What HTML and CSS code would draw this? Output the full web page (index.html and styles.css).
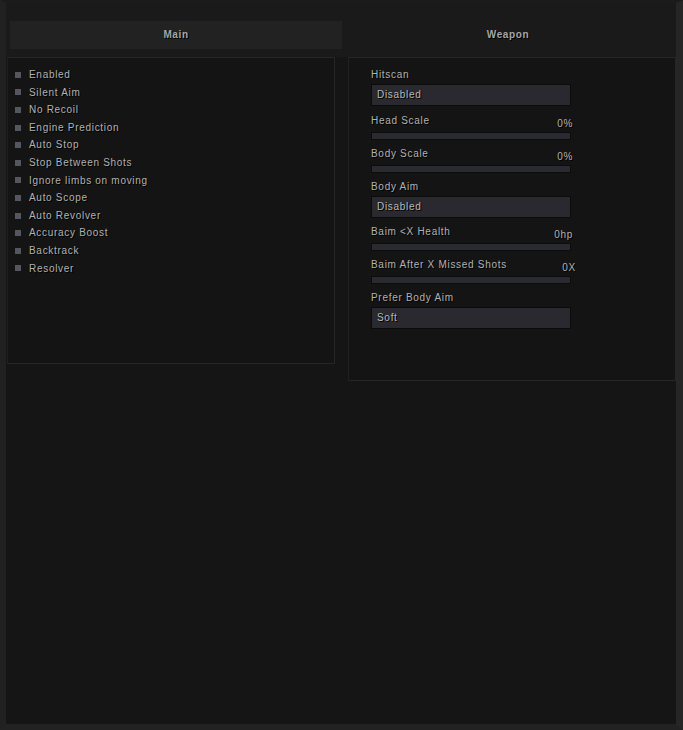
FILE: index.html
```html
<!DOCTYPE html>
<html>
<head>
<meta charset="utf-8">
<link rel="stylesheet" href="styles.css">
</head>
<body>
<div class="frame">
  <div class="tabs">
    <div class="tab active">Main</div>
    <div class="tab">Weapon</div>
  </div>
  <div class="panels">
    <div class="panel left">
      <div class="check"><span class="box"></span>Enabled</div>
      <div class="check"><span class="box"></span>Silent Aim</div>
      <div class="check"><span class="box"></span>No Recoil</div>
      <div class="check"><span class="box"></span>Engine Prediction</div>
      <div class="check"><span class="box"></span>Auto Stop</div>
      <div class="check"><span class="box"></span>Stop Between Shots</div>
      <div class="check"><span class="box"></span>Ignore limbs on moving</div>
      <div class="check"><span class="box"></span>Auto Scope</div>
      <div class="check"><span class="box"></span>Auto Revolver</div>
      <div class="check"><span class="box"></span>Accuracy Boost</div>
      <div class="check"><span class="box"></span>Backtrack</div>
      <div class="check"><span class="box"></span>Resolver</div>
    </div>
    <div class="panel right">
      <div class="item first">
        <div class="label">Hitscan</div>
        <div class="dropdown">Disabled</div>
      </div>
      <div class="item">
        <div class="head"><span class="label">Head Scale</span><span class="value">0%</span></div>
        <div class="bar"></div>
      </div>
      <div class="item">
        <div class="head"><span class="label">Body Scale</span><span class="value">0%</span></div>
        <div class="bar"></div>
      </div>
      <div class="item">
        <div class="label">Body Aim</div>
        <div class="dropdown">Disabled</div>
      </div>
      <div class="item">
        <div class="head"><span class="label">Baim &lt;X Health</span><span class="value">0hp</span></div>
        <div class="bar"></div>
      </div>
      <div class="item">
        <div class="head"><span class="label">Baim After X Missed Shots</span><span class="value wide">0X</span></div>
        <div class="bar"></div>
      </div>
      <div class="item">
        <div class="label">Prefer Body Aim</div>
        <div class="dropdown">Soft</div>
      </div>
    </div>
  </div>
</div>
</body>
</html>
```

FILE: styles.css
```css
* { box-sizing: border-box; }
html, body {
  margin: 0;
  padding: 0;
  background: #1f1f1f;
}
body {
  width: 683px;
  height: 730px;
  overflow: hidden;
  font-family: "Liberation Sans", Arial, sans-serif;
  font-weight: normal;
  font-size: 10px;
  letter-spacing: 0.7px;
  color: #b2b2b2;
  text-shadow: 1px 1px 0 #000;
}
.frame {
  width: 683px;
  height: 730px;
  border-left: 6px solid #212121;
  border-right: 7px solid #262626;
  border-bottom: 6px solid #222222;
  border-top: 3px solid #1b1b1b;
  background: #151515;
  display: flex;
  flex-direction: column;
}
.tabs {
  display: flex;
  height: 54px;
  padding: 18px 0 0 4px;
  background: #1a1a1a;
}
.tab {
  width: 332px;
  height: 28px;
  line-height: 27px;
  text-align: center;
  color: #a6a6a6;
  font-weight: bold;
  letter-spacing: 0.6px;
}
.tab.active {
  background: #222222;
}
.panels {
  display: flex;
  gap: 13px;
  align-items: flex-start;
  padding-left: 1px;
}
.panel {
  border: 1px solid #262626;
  border-left-color: #202020;
  background: #141414;
}
.left {
  width: 328px;
  height: 307px;
  padding: 8px 0 0 7px;
}
.check {
  display: flex;
  align-items: center;
  height: 17.6px;
  line-height: 17.6px;
}
.box {
  width: 6px;
  height: 6px;
  background: #56565f;
  margin-right: 8px;
}
.right {
  width: 328px;
  height: 324px;
  padding: 11px 0 0 22px;
  display: flex;
  flex-direction: column;
}
.item {
  width: 200px;
  margin-bottom: 8px;
}
.item.first { margin-bottom: 9px; }
.label {
  display: block;
  height: 12px;
  line-height: 12px;
}
.head {
  display: flex;
  justify-content: space-between;
  height: 12px;
}
.head .label { display: inline; }
.value {
  position: relative;
  top: 3px;
  line-height: 12px;
  margin-right: -2px;
}
.value.wide {
  margin-right: -5px;
}
.dropdown {
  margin-top: 3px;
  height: 22px;
  line-height: 20px;
  padding-left: 5px;
  background: #29292f;
  border: 1px solid #0b0b0b;
  color: #b8b8b8;
}
.bar {
  margin-top: 5px;
  height: 8px;
  background: #2a2a31;
  border: 1px solid #0c0c0c;
}
```
